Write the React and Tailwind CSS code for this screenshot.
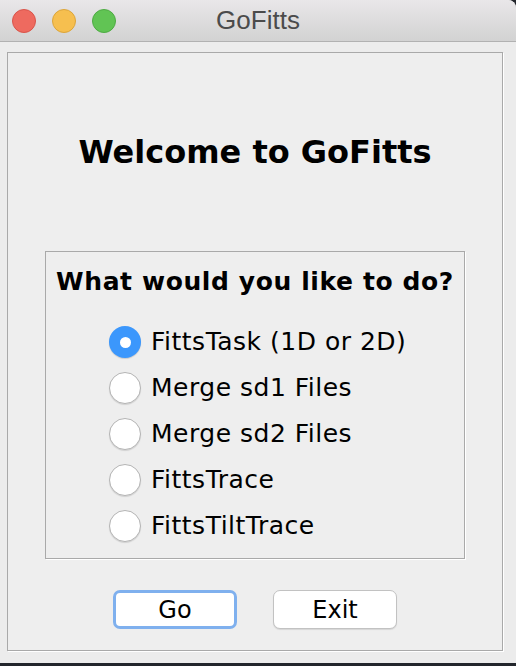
import React, { useState } from 'react';

const options = [
  'FittsTask (1D or 2D)',
  'Merge sd1 Files',
  'Merge sd2 Files',
  'FittsTrace',
  'FittsTiltTrace',
];

const Radio = ({ checked }) =>
  checked ? (
    <span className="flex items-center justify-center w-[32px] h-[32px] rounded-full bg-[#3b97fc] shadow-[0_1px_1px_rgba(0,0,0,0.15)]">
      <span className="w-[11px] h-[11px] rounded-full bg-white" />
    </span>
  ) : (
    <span className="w-[32px] h-[32px] rounded-full bg-white border border-[#b4b4b4] shadow-[0_1px_1px_rgba(0,0,0,0.12)]" />
  );

const App = () => {
  const [choice, setChoice] = useState(0);

  return (
    <div className="w-[516px] h-[666px] bg-[#23262c] overflow-hidden">
      <div className="h-[663px] bg-[#ececec] rounded-tr-[8px] flex flex-col">
        {/* title bar */}
        <div className="h-[42px] bg-gradient-to-b from-[#e9e7e9] to-[#d2d2d2] border-b border-[#b1b1b1] rounded-tr-[8px] flex items-center relative">
          <div className="flex items-center gap-[16px] pl-[12px]">
            <span className="w-[24px] h-[24px] rounded-full bg-[#ee6a5f] border border-[#d9544a]" />
            <span className="w-[24px] h-[24px] rounded-full bg-[#f6bf4f] border border-[#dca53a]" />
            <span className="w-[24px] h-[24px] rounded-full bg-[#61c454] border border-[#4eab43]" />
          </div>
          <span className="absolute left-0 right-0 text-center text-[26px] text-[#4b4b4b] font-['Liberation_Sans',sans-serif] pointer-events-none">
            GoFitts
          </span>
        </div>

        {/* content */}
        <div className="flex-1 pt-[10px] pl-[7px] pr-[13px] pb-[12px] font-['DejaVu_Sans',sans-serif] text-black">
          <div className="h-full border border-[#a9a9a9] shadow-[1px_1px_0_#fff] bg-[#eeeeee] flex flex-col items-center">
            <div className="h-[198px] flex items-center justify-center">
              <h1 className="text-[32px] font-bold leading-[40px]">Welcome to GoFitts</h1>
            </div>

            <div className="w-[420px] h-[308px] border border-[#a9a9a9] shadow-[1px_1px_0_#fff] flex flex-col pt-[14px]">
              <h2 className="text-[25px] font-bold leading-[32px] tracking-[0.6px] text-center">What would you like to do?</h2>
              <div className="mt-[21px] flex flex-col pl-[63px]">
                {options.map((opt, i) => (
                  <label
                    key={opt}
                    onClick={() => setChoice(i)}
                    className="h-[46px] flex items-center gap-[10px] cursor-pointer"
                  >
                    <Radio checked={choice === i} />
                    <span className="text-[25px] leading-[30px] tracking-[0.5px]">{opt}</span>
                  </label>
                ))}
              </div>
            </div>

            <div className="mt-[31px] flex gap-[36px]">
              <button className="w-[124px] h-[39px] rounded-[7px] bg-white border-[3px] border-[#7fb0ee] text-[24px] leading-none">
                Go
              </button>
              <button className="w-[124px] h-[39px] rounded-[7px] bg-white border border-[#c2c2c2] shadow-[0_1px_1px_rgba(0,0,0,0.1)] text-[24px] leading-none">
                Exit
              </button>
            </div>
          </div>
        </div>
      </div>
    </div>
  );
};

export default App;
